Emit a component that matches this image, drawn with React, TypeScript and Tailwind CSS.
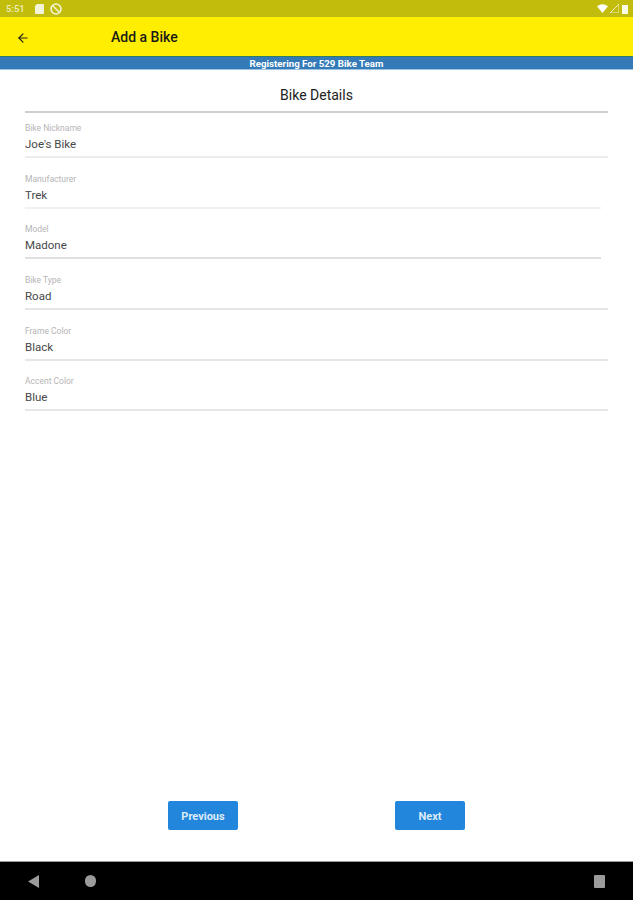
import { ArrowLeft } from 'lucide-react'

const FIELDS = [
  { label: 'Bike Nickname', value: "Joe's Bike", line: 'bg-[#ececec]', inset: 'mr-0' },
  { label: 'Manufacturer', value: 'Trek', line: 'bg-[#f0f0f0]', inset: 'mr-[7px]' },
  { label: 'Model', value: 'Madone', line: 'bg-[#e0e0e0]', inset: 'mr-[7px]' },
  { label: 'Bike Type', value: 'Road', line: 'bg-[#e6e6e6]', inset: 'mr-0' },
  { label: 'Frame Color', value: 'Black', line: 'bg-[#e6e6e6]', inset: 'mr-0' },
  { label: 'Accent Color', value: 'Blue', line: 'bg-[#e6e6e6]', inset: 'mr-0' },
]

function StatusBar() {
  return (
    <div className="flex h-[17px] items-center justify-between bg-[#c2bc0c] pl-[6px] pr-[5px]">
      <div className="flex items-center">
        <span className="w-[29px] text-[9.5px] font-medium leading-none text-[#eeeebb]">5:51</span>
        <svg width="9" height="10" viewBox="0 0 9 10">
          <path d="M2 0h6a1 1 0 0 1 1 1v8a1 1 0 0 1-1 1H1a1 1 0 0 1-1-1V2z" fill="#f4f4d8" />
        </svg>
        <svg width="12" height="12" viewBox="0 0 12 12" className="ml-[6px]">
          <circle cx="6" cy="6" r="5" fill="none" stroke="#f4f4d8" strokeWidth="1.6" />
          <path d="M3 3l6 6" stroke="#f4f4d8" strokeWidth="1.4" />
        </svg>
      </div>
      <div className="flex items-center gap-[1px]">
        <svg width="11" height="9" viewBox="0 0 11 9">
          <path d="M0 2.2Q5.5-1.8 11 2.2L5.5 9z" fill="#ffffff" />
        </svg>
        <svg width="9" height="9" viewBox="0 0 9 9" className="mx-[1px]">
          <path d="M0 9L9 0v9z" fill="none" stroke="#eeeec0" strokeWidth="1" />
        </svg>
        <svg width="7" height="10" viewBox="0 0 7 10">
          <path d="M1 1h6v9H1z" fill="#fafae6" />
        </svg>
      </div>
    </div>
  )
}

function Field({ label, value, line, inset }: (typeof FIELDS)[number]) {
  return (
    <div className="h-[50.7px]">
      <p className="pt-[3px] text-[8.5px] leading-[10px] text-[#b5b5b5]">{label}</p>
      <p className="mt-[3px] text-[11.5px] leading-[16px] text-[#484848]">{value}</p>
      <div className={`mt-[4px] h-[2px] ${line} ${inset}`} />
    </div>
  )
}

export default function App() {
  return (
    <div className="flex h-[900px] flex-col bg-white font-['Roboto',sans-serif]">
      <StatusBar />
      <header className="flex h-[39px] items-center bg-[#ffee00] pl-[16px] pt-[2px]">
        <ArrowLeft size={14} strokeWidth={2} className="text-[#222]" />
        <h1 className="ml-[81px] text-[14px] font-medium text-[#1a1a1a]">Add a Bike</h1>
      </header>
      <div className="h-[1px] bg-[#2f7d66]" />
      <div className="flex h-[13px] items-center justify-center border-b border-[#9cc3e4] bg-[#337ab7] pt-[2px] text-[9.7px] font-bold text-white">
        Registering For 529 Bike Team
      </div>

      <main className="flex-1 px-[25px]">
        <h2 className="pt-[17px] pb-[7px] text-center text-[14px] leading-[17px] text-[#222]">
          Bike Details
        </h2>
        <div className="h-[2px] bg-[#d0d0d0]" />
        <div className="pt-[7px]">
          {FIELDS.map((field) => (
            <Field key={field.label} {...field} />
          ))}
        </div>
      </main>

      <div className="flex gap-[157px] pb-[31px] pl-[168px]">
        <button className="h-[29px] w-[70px] rounded-[2px] bg-[#2186dc] pt-[4px] text-[11px] font-bold text-[#dcebf9]">
          Previous
        </button>
        <button className="h-[29px] w-[70px] rounded-[2px] bg-[#2186dc] pt-[4px] text-[11px] font-bold text-[#dcebf9]">
          Next
        </button>
      </div>

      <nav className="relative h-[39px] border-t border-[#9a9a9a] bg-black">
        <div className="flex h-full items-center pl-[28px] pr-[28px]">
          <svg width="11" height="13" viewBox="0 0 11 13">
            <path d="M11 0v13L0 6.5z" fill="#9b9b9b" />
          </svg>
          <span className="ml-[46px] h-[12px] w-[11px] rounded-full bg-[#9b9b9b]" />
          <span className="ml-auto h-[13px] w-[11px] rounded-[1px] bg-[#9b9b9b]" />
        </div>
      </nav>
    </div>
  )
}
